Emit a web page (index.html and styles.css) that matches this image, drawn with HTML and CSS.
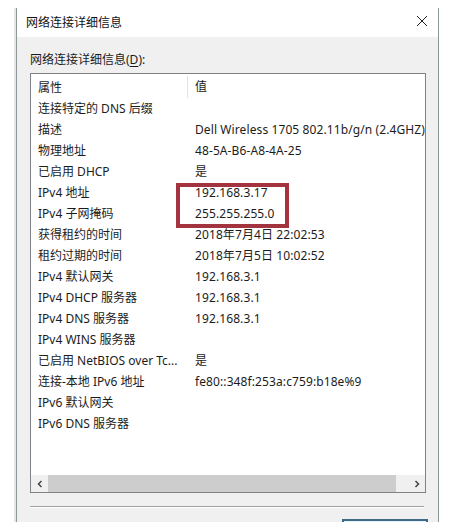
FILE: index.html
```html
<!DOCTYPE html>
<html lang="zh-CN">
  <head>
    <meta charset="UTF-8" />
    <meta name="viewport" content="width=device-width, initial-scale=1.0" />
    <title>网络连接详细信息</title>
    <link rel="stylesheet" href="styles.css">
  </head>
  <body>
    <div class="window">
      <div class="titlebar">
        <span class="title">网络连接详细信息</span>
        <svg class="close" width="12" height="12" viewBox="0 0 12 12">
          <path d="M1 1 L11 11 M11 1 L1 11" stroke="#222" stroke-width="1" fill="none" />
        </svg>
      </div>

      <div class="content">
        <div class="label">网络连接详细信息(<u>D</u>):</div>

        <div class="listbox">
          <div class="list-head">
            <div class="cell key">属性</div>
            <div class="cell val sep">值</div>
          </div>

          <div class="rows">
            <div class="row"><div class="cell key">连接特定的 DNS 后缀</div><div class="cell val"></div></div>
            <div class="row"><div class="cell key">描述</div><div class="cell val">Dell Wireless 1705 802.11b/g/n (2.4GHZ)</div></div>
            <div class="row"><div class="cell key">物理地址</div><div class="cell val">48-5A-B6-A8-4A-25</div></div>
            <div class="row"><div class="cell key">已启用 DHCP</div><div class="cell val">是</div></div>
            <div class="row"><div class="cell key">IPv4 地址</div><div class="cell val">192.168.3.17</div></div>
            <div class="row"><div class="cell key">IPv4 子网掩码</div><div class="cell val">255.255.255.0</div></div>
            <div class="row"><div class="cell key">获得租约的时间</div><div class="cell val">2018年7月4日 22:02:53</div></div>
            <div class="row"><div class="cell key">租约过期的时间</div><div class="cell val">2018年7月5日 10:02:52</div></div>
            <div class="row"><div class="cell key">IPv4 默认网关</div><div class="cell val">192.168.3.1</div></div>
            <div class="row"><div class="cell key">IPv4 DHCP 服务器</div><div class="cell val">192.168.3.1</div></div>
            <div class="row"><div class="cell key">IPv4 DNS 服务器</div><div class="cell val">192.168.3.1</div></div>
            <div class="row"><div class="cell key">IPv4 WINS 服务器</div><div class="cell val"></div></div>
            <div class="row"><div class="cell key">已启用 NetBIOS over Tc...</div><div class="cell val">是</div></div>
            <div class="row"><div class="cell key">连接-本地 IPv6 地址</div><div class="cell val">fe80::348f:253a:c759:b18e%9</div></div>
            <div class="row"><div class="cell key">IPv6 默认网关</div><div class="cell val"></div></div>
            <div class="row"><div class="cell key">IPv6 DNS 服务器</div><div class="cell val"></div></div>
          </div>

          <!-- red annotation around the IPv4 address + mask -->
          <div class="highlight"></div>

          <div class="hscroll">
            <div class="arrow-btn">
              <svg width="8" height="8" viewBox="0 0 8 8">
                <path d="M5.5 1 L2.5 4 L5.5 7" stroke="#444" stroke-width="1.5" fill="none" />
              </svg>
            </div>
            <div class="thumb"></div>
            <div class="track"></div>
            <div class="arrow-btn">
              <svg width="8" height="8" viewBox="0 0 8 8">
                <path d="M2.5 1 L5.5 4 L2.5 7" stroke="#444" stroke-width="1.5" fill="none" />
              </svg>
            </div>
          </div>
        </div>

        <div class="divider"></div>

        <div class="buttons">
          <div class="btn"></div>
        </div>
      </div>
    </div>
  </body>
</html>
```

FILE: styles.css
```css
* {
  margin: 0;
  padding: 0;
  box-sizing: border-box;
}

body {
  font-family: "Noto Sans", "Noto Sans CJK SC", sans-serif;
  font-size: 12px;
  color: #1c1c1c;
  background: #ffffff;
  overflow: hidden;
}

.window {
  margin: 8px 0 0 16px;
  width: 423px;
  border-left: 1px solid #8e9798;
  border-right: 1px solid #8e9798;
  box-shadow: -2px 0 0 #e2e6e6;
  height: 540px;
  background: #f0f0f0;
}

.titlebar {
  height: 29px;
  background: #ffffff;
  display: flex;
  align-items: center;
  justify-content: space-between;
  padding: 0 10px 2px 9px;
}

.title {
  color: #111;
}

.close {
  margin-top: -1px;
}

.content {
  padding: 14px 12px 0 13px;
}

.label {
  height: 22px;
  line-height: 18px;
}

.label u {
  text-decoration: underline;
  text-underline-offset: 2px;
}

.listbox {
  position: relative;
  height: 420px;
  background: #ffffff;
  border: 1px solid #7f8388;
  overflow: hidden;
  display: flex;
  flex-direction: column;
}

.list-head {
  display: grid;
  grid-template-columns: 156px 1fr;
  height: 24px;
  align-items: center;
  padding-top: 2px;
}

.list-head .sep {
  border-left: 1px solid #e3e3e3;
  height: 22px;
  line-height: 22px;
  padding-left: 7px;
}

.rows {
  flex: 1;
}

.row {
  display: grid;
  grid-template-columns: 156px 1fr;
  height: 21px;
  line-height: 21px;
}

.cell {
  white-space: nowrap;
  overflow: hidden;
}

.key {
  padding-left: 7px;
}

.val {
  padding-left: 8px;
  letter-spacing: 0.1px;
}

.highlight {
  position: absolute;
  left: 145px;
  top: 109px;
  width: 113px;
  height: 45px;
  border: 4px solid #a3333f;
}

.hscroll {
  display: flex;
  height: 17px;
  background: #f0f0f0;
}

.arrow-btn {
  width: 17px;
  display: flex;
  align-items: center;
  justify-content: center;
}

.thumb {
  width: 348px;
  background: #cdcdcd;
}

.track {
  flex: 1;
}

.divider {
  margin-top: 13px;
  height: 2px;
  border-top: 1px solid #a0a0a0;
  border-bottom: 1px solid #ffffff;
  margin-right: 2px;
}

.buttons {
  display: flex;
  justify-content: flex-end;
  margin-top: 11px;
}

.btn {
  width: 86px;
  height: 24px;
  margin-right: -2px;
  border: 2px solid #3e6a84;
  background: #e5f1fb;
}
```
